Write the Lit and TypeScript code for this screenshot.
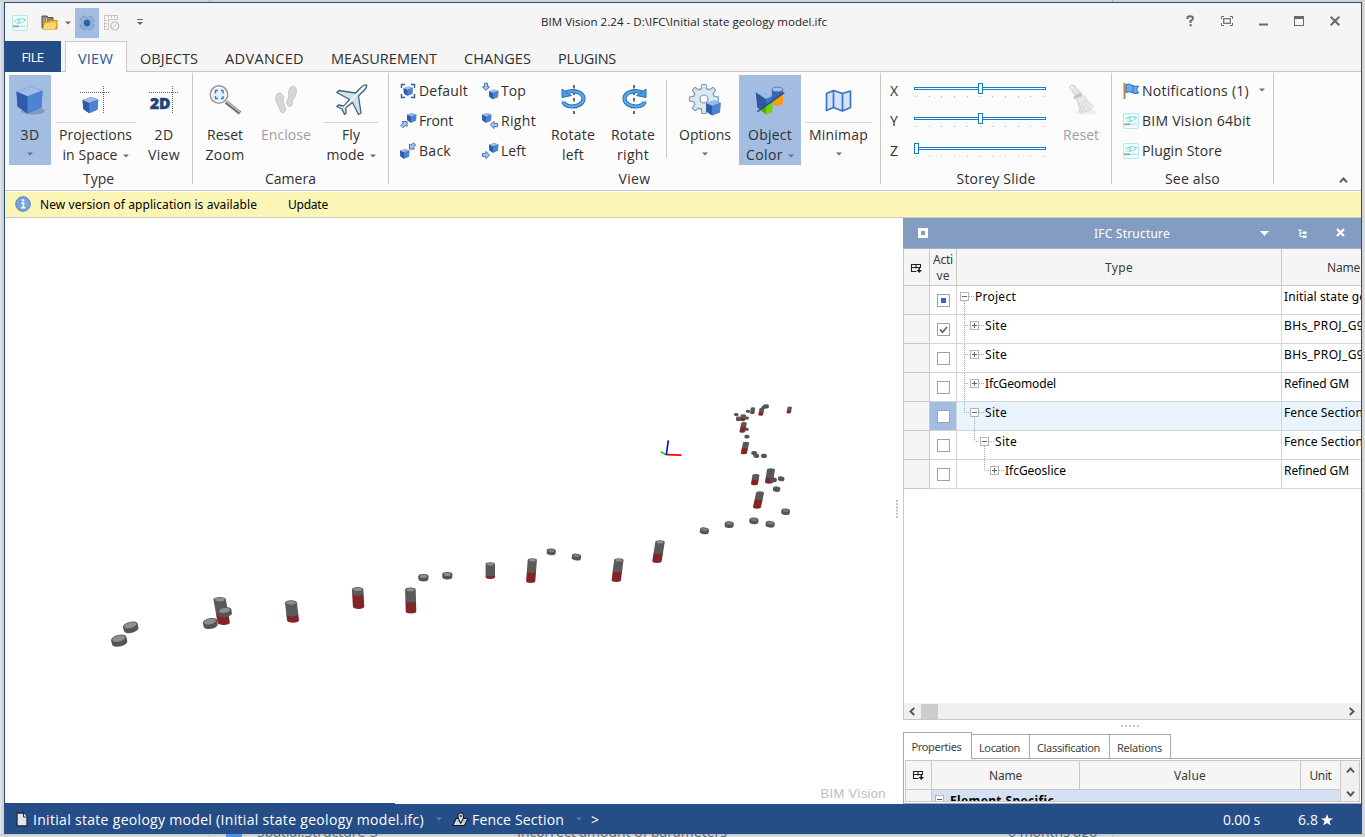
import { LitElement, html, svg, css, nothing } from "lit";
import { customElement, property } from "lit/decorators.js";

/* Single-line label whose tracking is adjusted so that it fills a given width. */
@customElement("fit-text")
class FitText extends LitElement {
  @property({ type: Number }) w = 0;
  @property() text = "";
  static styles = css`
    :host { display: inline-block; white-space: pre; flex: none; }
    .t { display: inline-block; }
  `;
  updated() {
    const t = this.renderRoot.querySelector(".t") as HTMLElement;
    t.style.letterSpacing = "0px";
    const n = t.getBoundingClientRect().width;
    if (this.w && n) {
      const ls = (this.w - n) / this.text.length;
      t.style.letterSpacing = ls.toFixed(3) + "px";
    }
  }
  render() { return html`<span class="t">${this.text}</span>`; }
}

const T = (text: string, w: number) => html`<fit-text .text=${text} .w=${w}></fit-text>`;

/* ---------- icons ---------- */
const cube = (x: number, y: number, s: number) => svg`
  <g transform="translate(${x} ${y}) scale(${s})">
    <path d="M0 5 L14 0 L26 4 L25 21 L11 27 L1 20Z" fill="#3f6fb8"/>
    <path d="M0 5 L14 0 L26 4 L11 10Z" fill="#9dbbe6"/>
    <path d="M0 5 L11 10 L11 27 L1 20Z" fill="#2b5da8"/>
    <path d="M11 10 L26 4 L25 21 L11 27Z" fill="#4c83d3"/>
  </g>`;
const arrow = (x: number, y: number, r: number) => svg`
  <path transform="translate(${x} ${y}) rotate(${r})" d="M0 3.6 L-3.6 0 L-1.6 0 L-1.6 -3.6 L1.6 -3.6 L1.6 0 L3.6 0Z"
    fill="#a9c4ec" stroke="#3a68ae" stroke-width="0.9"/>`;
const logo = () => html`<svg class="ic" width="16" height="16" viewBox="0 0 16 16">
  <rect x=".5" y=".5" width="15" height="15" rx="1.5" fill="#f3fcfd" stroke="#b4e8ed"/>
  <path d="M2.5 6 Q8 2.300 13.500 4.800 Q11 8.500 7 7.500 Q5.500 6 8 4.800" fill="none" stroke="#74d6df" stroke-width="1.100"/><path d="M3 7.500 Q5 8.800 8 8.500" fill="none" stroke="#9be0e6"/>
  <path d="M1 11.3H7" stroke="#9aa3a3" stroke-width="1.8"/><path d="M7 11.3H14.5" stroke="#c0ecef" stroke-width="1.8"/>
</svg>`;
const down = (c = "#6d6d6d") => html`<svg class="dn" width="6" height="4" viewBox="0 0 6 4"><path d="M0 .5H6L3 3.5Z" fill=${c}/></svg>`;

const rot = svg`<path d="M17 1V30" stroke="#444" stroke-width="1.600" stroke-dasharray="3.500 3"/><path d="M9 8.500 C17 5 26.500 8.500 26.500 14.500 C26.500 20 20 22.500 15 22.500 C9 22.500 6.500 19.500 6.500 17.500" fill="none" stroke="#2472bd" stroke-width="4.200"/><path d="M10 8.300 C17 5.500 26.500 9 26.500 14.500 C26.500 20 20 22.500 15 22.500 C10 22.500 7 20 6.500 18" fill="none" stroke="#5ba7e8" stroke-width="2.200"/><path d="M5 5V13.500L14.500 11.500Z" fill="#4b98dd" stroke="#2472bd"/>`;

const big: Record<string, unknown> = {
  cube: svg`<ellipse cx="19" cy="27" rx="12" ry="3.5" fill="#53709c" opacity=".45"/>${cube(2.5, 2.5, 1)}`,
  proj: svg`<path d="M0 8.500H30 M23.500 2V29" fill="none" stroke="#666" stroke-dasharray="1 1"/>${cube(2.6, 13, 0.6)}`,
  two: svg`<path d="M1 8.5H31 M24.5 2V29" fill="none" stroke="#666" stroke-dasharray="1 1"/><text x="2" y="24.5" font-family="Open Sans" font-weight="800" font-size="15.5" fill="#1f4378" stroke="#1f4378" stroke-width=".5" textLength="20.5" lengthAdjust="spacingAndGlyphs">2D</text>`,
  zoom: svg`<path d="M17 18 L31 29" stroke="#6d6d6d" stroke-width="4"/><path d="M17.5 17.5 L31 28" stroke="#c4c4c4" stroke-width="1.5"/>
    <circle cx="10" cy="10.5" r="8.6" fill="#e6f0fc" stroke="#999" stroke-width="1.8"/><circle cx="10" cy="10.5" r="7.4" fill="none" stroke="#fff"/>
    <path d="M6.5 9.5V6.500H9 M12 6.500H14V9.500 M14 12V14.500H12 M9 14.500H6.500V12" fill="none" stroke="#3a7ad0" stroke-width="1.400"/>`,
  feet: svg`<g fill="#d6d6d6" stroke="#c2c2c2" stroke-width=".8"><path d="M22 2.500 Q26 1 26.500 7 Q26 13 23.500 14.500 Q22 17 22.500 20 Q21 24 17.500 21.500 Q15.500 18 18 15 Q19.500 12 18.500 9 Q18.500 3.500 22 2.500Z"/>
    <path d="M9 9 Q13 9 13.500 14 Q12.500 19 14.500 21 Q17 27 13.500 29 Q10 29 9.500 25 Q9 22 7 20 Q5 15 6 12 Q7 9 9 9Z"/></g>`,
  plane: svg`<path d="M31.500 1 Q29 .3 26 3.500 L20.500 9 L4 6.500 L1.800 8.500 L14.500 15.500 L9 22 L3.500 21 L1.800 22.500 L7 25 L9.500 30.500 L11 29 L10.800 23.800 L17.500 18.500 L23.500 30.500 L26 29 L23.500 12 L29 6.500 Q32.500 3 31.500 1Z" fill="#cfe1ea" stroke="#42647a" stroke-width="1.300" stroke-linejoin="round"/><path d="M29 3 L9 23.500" stroke="#fff" stroke-width="1.500"/>`,
  rotl: rot,
  rotr: svg`<g transform="translate(34 0) scale(-1 1)">${rot}</g>`,
  gear: svg`${[0, 45, 90, 135, 180, 225, 270, 315].map(a => svg`<path transform="rotate(${a} 15 15)" d="M12.300 5 L13 .5 H17 L17.700 5" fill="#dfe9f2" stroke="#7d9bb5" stroke-width="1.200"/>`)}
    <circle cx="15" cy="15" r="10.600" fill="#dfe9f2" stroke="#7d9bb5" stroke-width="1.200"/>${[0, 45, 90, 135, 180, 225, 270, 315].map(a => svg`<path transform="rotate(${a} 15 15)" d="M12.900 4.600H17.100" stroke="#dfe9f2" stroke-width="2"/>`)}<circle cx="15" cy="15" r="4" fill="#fdfdfd" stroke="#7d9bb5" stroke-width="1.200"/>${cube(17, 16.500, 0.56)}`,
  color: svg`<path d="M17.800 5.500V17.500Q23.500 22.500 29 17.500V5.500Z" fill="#3565ae"/><path d="M17.800 17L29 9.500V19.500Q23.500 24 17.800 19.500Z" fill="#ff9a0b"/><ellipse cx="23.400" cy="5.500" rx="5.600" ry="2.300" fill="#a3bfe8" stroke="#4672b4" stroke-width=".8"/>
    <path d="M1.700 8.300L8.700 6.200L18.300 12L12 15Z" fill="#9ab9e6"/><path d="M1.700 8.300L12 15V29L3.300 23.700Z" fill="#2b5aa4"/><path d="M12 15L18.300 12V20L12 24Z" fill="#3f70be"/>
    <path d="M5.500 25.500L12 21V30.500Z" fill="#55ab12"/><path d="M12 21.500L18.300 17V28.300L12 30.500Z" fill="#78d200"/><path d="M3.300 27.700L30.300 8.700" stroke="#214a83" stroke-width="1.400"/>`,
  map: svg`<path d="M3.500 9.500L10.500 6.500V23.500L3.500 26.500Z M10.500 6.500L19.500 9.500V27L10.500 23.500Z M19.500 9.500L27.500 7V23.500L19.500 27Z" fill="#d4e3f7" stroke="#3a72c4" stroke-width="1.700" stroke-linejoin="round"/>`,
  broom: svg`<ellipse cx="21" cy="28.500" rx="11" ry="2.500" fill="#eee"/><path d="M11 14L19 11.500Q23 19 29 22.500Q25 28 15 28.500Q14 21 11 14Z" fill="#e9e9e9" stroke="#d6d6d6"/><path d="M16.500 17L20 28M19 16L24 26M14 18L17 28" stroke="#d6d6d6"/><path d="M4.500 3Q6.500 -.5 9.500 2L15.500 8.500L10.500 12Z" fill="#e4e4e4" stroke="#cacaca"/><path d="M8.800 14L17 9.800" stroke="#c4c4c4" stroke-width="2.600"/><circle cx="7" cy="3.800" r="1.200" fill="#fff"/>`,
};
const Big = (k: string) => html`<svg class="bi" width="32" height="32" viewBox="0 0 32 32">${big[k]}</svg>`;

const small: Record<string, unknown> = {
  Default: svg`<path d="M1.500 5V1.500H5 M11 1.500H14.500V5 M14.500 11V14.500H11 M5 14.500H1.500V11" fill="none" stroke="#2e5a98" stroke-width="1.400"/>${cube(3.600, 3.400, 0.35)}`,
  Front: svg`${cube(7, 0, 0.36)}${arrow(4.500, 11, -135)}`,
  Back: svg`${cube(0, 6, 0.36)}${arrow(12, 3.500, 45)}`,
  Top: svg`${cube(7, 6.500, 0.36)}${arrow(4, 3.800, 0)}`,
  Right: svg`${cube(0, 0, 0.36)}${arrow(12, 12, 90)}`,
  Left: svg`${cube(7, 0, 0.36)}${arrow(4, 12, -90)}`,
};
const Small = (k: string, w: number) => html`<div class="sm"><svg class="ic" width="17" height="16" viewBox="0 0 17 16">${small[k]}</svg>${T(k, w)}</div>`;

/* ---------- 3D scene ---------- */
/* [topX, topY, bottomX, bottomY, half width, y where rock begins] */
const columns = [
  [219.7, 599.5, 223.7, 622.5, 6.2, 613], [291, 602.8, 293, 620.3, 6, 614], [357.6, 589.5, 358.600, 606.500, 5.7, 593.5],
  [410.4, 589.7, 411, 611.2, 5.3, 600.6], [490.3, 564.3, 490.3, 577, 4.7, 574.5], [532.3, 560.3, 530.7, 581, 4.6, 571],
  [618.8, 560.3, 616.3, 580, 4.7, 570.2], [660, 542.3, 657, 561, 4.7, 552.2], [760, 493, 757, 507, 4, 498.2],
  [755.9, 475.400, 754.500, 483.8, 3.5, 478.5], [770.9, 470, 769, 482, 4, 476.500], [746, 443, 743.900, 453, 3.1, 447.3],
  [744, 423.3, 742.3, 431.500, 2.8, 426], [743.300, 415.4, 742.7, 420, 2.7, 417], [738.5, 417.6, 738.3, 420, 2.4, 419],
  [752.9, 408.2, 752.3, 413, 2.2, 411.500], [761.9, 408.7, 760.700, 414.8, 2.4, 411.3], [789.700, 407.4, 788.700, 412.6, 2.2, 410],
];
/* [x, y, rx, tilt] */
const discs = [
  [118.700, 638.6, 7.3, -14], [130.2, 625.3, 7, -14], [210, 621.6, 6.700, -10], [224.700, 610.4, 6.3, -8], [423.4, 576.3, 4.7, 0],
  [447.3, 574.300, 4.7, 0], [551.3, 550.600, 4.200, 3], [576.6, 555.800, 4.300, 6], [704.500, 529.6, 4.2, 8], [729.3, 523.400, 4.2, 6],
  [754, 519.6, 4.2, 6], [770.3, 523, 4.2, 8], [785.7, 510.6, 4, 6], [776.7, 488.2, 3.4, 6], [781.3, 477.900, 3, 6], [773.500, 479, 3, 0],
  [754.3, 452.3, 2.7, 6], [756.3, 455, 2.7, 6], [764, 455.2, 2.7, 6], [747, 436, 2.3, 4], [746.7, 428.8, 1.9, 4],
  [746.7, 417.4, 2, 4], [736.3, 414, 2, 4], [748, 410.800, 1.900, 4], [766, 405.600, 2.600, 0], [763.600, 406.800, 2, -10],
];
const drawColumn = ([x1, y1, x2, y2, w, ys]: number[]) => {
  const k = (ys - y1) / (y2 - y1), xs = x1 + (x2 - x1) * k, ry = w * 0.42;
  const seg = (ax: number, ay: number, bx: number, by: number, c: string) =>
    svg`<path d="M${ax - w} ${ay} L${bx - w} ${by} A${w} ${ry} 0 0 0 ${bx + w} ${by} L${ax + w} ${ay}Z" fill=${c} />`;
  return svg`${seg(xs, ys, x2, y2, "#852427")}${seg(x1, y1, xs, ys, "#595959")}
    <ellipse cx=${x1} cy=${y1} rx=${w} ry=${ry} fill="#595959"/>
    ${w > 4.2 ? svg`<ellipse cx=${x1} cy=${y1} rx=${w - 1.200} ry=${ry - 0.7} fill="#8e8e8e"/>` : nothing}`;
};
const drawDisc = ([x, y, r0, a]: number[]) => {
  const r = r0 * 1.07, ry = r * 0.47, h = r * 0.55;
  return svg`<g transform="rotate(${a} ${x} ${y})"><path d="M${x - r} ${y} V${y + h} A${r} ${ry} 0 0 0 ${x + r} ${y + h} V${y}Z" fill="#555"/>
    <ellipse cx=${x} cy=${y} rx=${r} ry=${ry} fill="#555"/>${r > 3.9 ? svg`<ellipse cx=${x} cy=${y} rx=${r - 1.2} ry=${ry - 0.7} fill=${r > 4.7 ? "#8e8e8e" : "#7c7c7c"}/>` : nothing}</g>`;
};

/* ---------- data ---------- */
const rows = [
  { d: 0, open: true, t: "Project", w: 41, n: "Initial state geology", nw: 114, c: "part" },
  { d: 1, open: false, t: "Site", w: 22, n: "BHs_PROJ_G9", nw: 80, c: "on" },
  { d: 1, open: false, t: "Site", w: 22, n: "BHs_PROJ_G9", nw: 80, c: "" },
  { d: 1, open: false, t: "IfcGeomodel", w: 71, n: "Refined GM", nw: 65, c: "" },
  { d: 1, open: true, t: "Site", w: 22, n: "Fence Section", nw: 79, c: "", sel: true },
  { d: 2, open: true, t: "Site", w: 22, n: "Fence Section", nw: 79, c: "" },
  { d: 3, open: false, t: "IfcGeoslice", w: 61, n: "Refined GM", nw: 65, c: "" },
];
const guides = ["M9.500 15V29", "M9.500 0V29M10 10.500H14", "M9.500 0V29M10 10.500H14", "M9.500 0V29M10 10.500H14",
  "M9.500 0V10.500H14M19.500 15V29", "M19.500 0V10.500H24M29.500 15V29", "M29.500 0V10.500H34"];
const colIcon = html`<svg width="11" height="10" viewBox="0 0 11 10"><path d="M.500 1.500H9.500V5 M.500 1V8.500H5.500 M5 1V5.500 M.500 4.500H9.500" fill="none" stroke="#222" stroke-width="1.100"/><path d="M5.500 7H11L8.200 10Z M7.500 5H9V7.500H7.500Z" fill="#222"/></svg>`;
const chev = (r: number) => html`<svg width="9" height="9" viewBox="0 0 9 9"><path transform="rotate(${r} 4.500 4.500)" d="M6.300 1L2.500 4.500L6.300 8" fill="none" stroke="#555" stroke-width="1.900"/></svg>`;

@customElement("app-root")
class AppRoot extends LitElement {
  static styles = css`
    :host { display: block; width: 1365px; height: 837px; overflow: hidden; font-family: "Open Sans", "Noto Sans", sans-serif; font-size: 14px; color: #303030; }
    * { box-sizing: border-box; }
    svg { display: block; flex: none; overflow: visible; }
    .desk { display: grid; grid-template: 2px 832px 3px / 4px 1358px 3px; height: 837px; background: linear-gradient(90deg, #e2e4e8, #c8cbd0 4px, #c8cbd0 1361px, #dcdcdc); }
    .above { grid-column: 1 / 4; background: #d2d2d2; display: flex; padding-left: 209px; gap: 902px; }
    .above i { width: 1px; background: #b5b5b5; }
    .win { grid-column: 2; border: 1px solid #254d87; border-bottom: 0; display: flex; flex-direction: column; background: #fff; overflow: hidden; }
    .below { grid-column: 1 / 4; background: linear-gradient(#c4c4c4, #e0e0e0); overflow: hidden; display: flex; height: 3px; color: #666; font-size: 14px; padding-left: 209px; }
    .below .ln { width: 1px; background: #c0c0c0; } .below .bl { width: 16px; background: #4f95dc; margin: 0 15px 0 16px; }
    .below span { line-height: 20px; margin-top: -12px; }
    .b1 { width: 260px; } .b2 { width: 491px; } .b3 { width: 104px; }

    .title { height: 38px; background: #f5f5f5; display: grid; grid-template-columns: 150px 1fr 190px; align-items: center; flex: none; }
    .qat { display: flex; height: 38px; align-items: center; padding: 1px 0 0 7px; }
    .qat .folder { margin-left: 13px; } .qat .q1 { margin-left: 7px; }
    .qat .tog { margin-left: 4px; width: 24px; height: 30px; background: #a3bce2; display: grid; place-items: center; }
    .qat .grid { margin-left: 5px; } .qat .more { margin-left: 17px; }
    .cap { padding-left: 386px; font-size: 11.500px; line-height: 38px; color: #222; }
    .sys { display: flex; align-items: center; justify-content: space-between; padding: 0 21px 2px 15px; }

    .tabs { height: 31px; background: #f5f5f5; display: flex; align-items: stretch; flex: none; box-shadow: inset 0 -1px #c8c8c8; font-size: 14.500px; }
    .file { width: 56px; height: 31px; background: #254d87; color: #fff; display: grid; place-items: center; font-size: 13px; padding-right: 1px; }
    .vtab { width: 62px; margin: 0 13px 0 4px; background: #fcfcfc; border: 1px solid #c8c8c8; border-bottom: 0; color: #2a579a; padding-left: 12px; line-height: 33px; }
    .tab { margin-right: 27px; line-height: 35px; }

    .ribbon { height: 119px; background: #fcfcfc; border-bottom: 1px solid #c8c8c8; display: flex; padding-top: 1px; flex: none; }
    .grp { height: 111px; border-right: 1px solid #c8c8c8; display: grid; grid-template-rows: 93px 1fr; flex: none; }
    .name { text-align: center; line-height: 26px; height: 18px; }
    .row { display: grid; padding-top: 2px; }
    .type { width: 188px; } .type .row { grid-template-columns: 4px 42px 5px 79px 5px 48px; }
    .cam { width: 196px; } .cam .row { grid-template-columns: 10px 44px 10px 58px 9px 54px; }
    .view { width: 492px; } .view .row { grid-template-columns: 11px 82px 62px 58px 62px 2px 9px 60px 4px 62px 5px 65px; }
    .sto { width: 231px; } .sto .row { grid-template-columns: 9px 156px 12px 46px; }
    .see { width: 162px; }
    .b { height: 90px; display: flex; flex-direction: column; align-items: center; padding-top: 9px; }
    .b.on { background: #a3bce2; }
    .b .bi { margin-bottom: 9px; }
    .b.hl .bi { margin-bottom: 6px; }
    .hl hr { align-self: stretch; margin: 0 0 2px; border: 0; border-top: 1px solid #d4d4d4; }
    .l { height: 20px; line-height: 20px; display: flex; align-items: center; gap: 5px; }
    .l .dn { margin-top: 1px; }
    .l.a .dn { margin-top: -2px; }
    .dis { color: #a0a0a0; }
    .vs { width: 1px; height: 78px; margin-top: 5px; background: #c8c8c8; }
    .sm { height: 30px; display: flex; align-items: center; gap: 2px; line-height: 30px; padding-top: 1px; }
    .see .sm { gap: 3px; padding-left: 11px; }
    .see .dn { margin-left: 7px; margin-top: -2px; }
    .slot { display: grid; grid-template-columns: 24px 132px; height: 30px; line-height: 32px; }
    .up { margin-left: auto; align-self: flex-end; padding: 0 13px 5px 0; }

    .note { height: 27px; padding-top: 1px; border-bottom: 1px solid #c8c8c8; background: linear-gradient(#fcfcfc 1px, #fbf6b6 1px); display: flex; align-items: center; flex: none;
      font: 12px "Noto Sans", sans-serif; color: #000; padding-left: 10px; }
    .note svg { margin-top: -1px; }
    .note .m { margin-left: 9px; } .note .u { margin-left: 31px; }

    .main { display: grid; grid-template-columns: 898px 1fr; height: 586px; flex: none; }
    .canvas { overflow: hidden; }

    .panel { display: flex; flex-direction: column; overflow: hidden; font: 12px "Noto Sans", sans-serif; color: #000; height: 586px; }
    .ph { height: 31px; background: #839cc2; border-bottom: 1px solid #9fb0cc; color: #fff; display: grid; grid-template-columns: 15px 176px 166px 38px 38px 1fr; align-items: center; flex: none; }
    .ph i { width: 10px; height: 10px; border: 3px solid #fff; background: #839cc2; }
    .thead, .tr { display: grid; grid-template-columns: 26px 27px 325px 1fr; }
    .table { border-left: 1px solid #c8c8c8; flex: none; height: 471px; }
    .thead { height: 37px; background: #f5f5f5; color: #3a3a3a; }
    .thead > * { border: 0 solid #c8c8c8; border-width: 0 1px 1px 0; display: grid; place-items: center; place-content: center; line-height: 16px; padding-top: 1px; }
    .thead > .nm { border-right: 0; justify-content: end; padding-right: 1px; }
    .tr { height: 29px; }
    .tr > * { border: 0 solid #d4d4d4; border-width: 0 1px 1px 0; overflow: hidden; }
    .tr > :first-child { background: #f5f5f5; border-color: #c8c8c8; }
    .tr > :last-child { border-right: 0; padding-left: 2px; line-height: 21px; white-space: nowrap; }
    .ck { display: grid; justify-content: center; padding-top: 8px; }
    .box { width: 13px; height: 13px; border: 1px solid #a3a3a3; background: #fff; display: grid; place-items: center; }
    .box b { width: 5px; height: 5px; background: #3c69ae; }
    .tr.sel > * { background-color: #e8f5ff; }
    .tr.sel > :first-child { background: #f5f5f5; }
    .tr.sel > .ck { background: #a3bce2; }
    .ty { display: flex; line-height: 21px; }
    .ty fit-text { margin-left: 1px; }
    .fill { height: 214px; }
    .hs { height: 17px; background: #f0f0f0; border-bottom: 1px solid #c8c8c8; display: flex; align-items: center; padding-left: 4px; }
    .hs i { width: 17px; height: 15px; background: #cdcdcd; margin-left: 4px; margin-right: auto; }
    .hs svg:last-child { margin-right: 5px; }
    .dots { height: 12px; display: flex; justify-content: center; gap: 2px; padding: 5px 4px 0 0; flex: none; }
    .dots i { width: 2px; height: 2px; background: #c2c2c2; }
    .ptabs { display: flex; align-items: flex-end; height: 27px; box-shadow: inset 0 -1px #a8a8a8; font-size: 11px; color: #444; flex: none; }
    .ptabs div { height: 25px; border: 1px solid #a8a8a8; border-left: 0; text-align: center; line-height: 26px; }
    .ptabs .p0 { height: 27px; width: 69px; border-left: 1px solid #a8a8a8; border-bottom: 0; line-height: 28px; background: #fff; padding-right: 2px; }
    .ptabs .p1 { width: 58px; padding-right: 2px; } .ptabs .p2 { width: 80px; padding-right: 2px; } .ptabs .p3 { width: 61px; padding-right: 1px; }
    .pbox { flex: none; height: 45px; border-left: 1px solid #a8a8a8; border-bottom: 1px solid #a8a8a8; padding: 1px 1px 1px 1px; }
    .pin { border: 1px solid #c8c8c8; height: 42px; overflow: hidden; display: grid; grid-template: 29px 20px / 26px 148px 221px 40px 1fr; color: #3a3a3a; }
    .pin > div { border: 0 solid #c8c8c8; border-width: 0 1px 1px 0; background: #f5f5f5; display: grid; place-items: center; }
    .pin > .sb { grid-column: 5; grid-row: 1 / 3; border: 0; background: #f0f0f0; align-content: start; padding-top: 5px; gap: 14px; }
    .pin > .es { grid-column: 2 / 5; background: #d5e0f2; display: flex; align-items: flex-start; gap: 6px; padding: 5px 0 0 3px; font-weight: 700; color: #000; line-height: 12px; font-size: 12px; }

    .status { height: 31px; background: #254d87; color: #fff; display: flex; align-items: center; padding: 0 28px 0 11px; flex: none; line-height: 30px; }
    .status .dn { margin: 0 0 2px 12px; }
    .s1 { margin-left: 5px; } .s2 { margin-left: 10px; } .s3 { margin-left: 3px; } .s4 { margin-left: 9px; }
    .s5 { margin-left: auto; } .s6 { margin-left: 38px; } .star { margin-left: 3px; }
  `;

  slider(name: string, pos: number) {
    return html`<div class="slot"><span>${name}</span>
      <svg width="132" height="30" viewBox="0 0 132 30">
        <rect x=".5" y="12.500" width="131" height="2" fill="#fff" stroke="#1979ca"/>
        <rect x=${pos + 0.5} y="8.500" width="4" height="10" fill="#fff" stroke="#1979ca"/>
        ${Array.from({ length: 11 }, (_, i) => svg`<rect x=${Math.round(2 + i * 12.7)} y="21" width="1" height="1" fill="#b0b0b0"/>`)}
      </svg></div>`;
  }

  render() {
    return html`<div class="desk">
      <div class="above"><i></i><i></i></div>
      <div class="win">
        <div class="title">
          <div class="qat">${logo()}
            <svg class="folder" width="17" height="16" viewBox="0 0 17 16"><path d="M1 1H6L7 2.500H12V13H1Z" fill="#8b8069" stroke="#605846"/><path d="M3 3V12M5.500 3V9" stroke="#cfc8b6"/><path d="M3.500 7H7.500L9 5.500H16V14H1.500Z" fill="#f6be3f" stroke="#c78a12"/><path d="M4 8H15.500L13.500 14H2Z" fill="#ffd66d"/></svg>
            <span class="q1">${down()}</span>
            <div class="tog"><svg width="16" height="16" viewBox="0 0 16 16"><circle cx="8" cy="8" r="3.400" fill="#2f619f"/><circle cx="8" cy="8" r="5.300" fill="none" stroke="#6f95ca" stroke-width=".9"/><circle cx="8" cy="8" r="7.300" fill="none" stroke="#5d86bf" stroke-dasharray="8.500 3" stroke-dashoffset="-1.500" stroke-width=".9"/></svg></div>
            <svg class="grid" width="16" height="16" viewBox="0 0 16 16" fill="none" stroke="#c6c6c6"><path d="M.500 .500H13.500V5 M.500 .500V14.500H4.500V4.500H13.500M4.500 1V3M7.500 1V3M10.500 1V3M1 5.500H3M1 8.500H3M1 11.500H3"/><circle cx="10.800" cy="11" r="4" stroke="#bbb" stroke-width="1.200"/><path d="M8 14L13.500 8"/></svg>
            <svg class="more" width="6" height="7" viewBox="0 0 6 7"><path d="M0 .5H6" stroke="#666"/><path d="M0 3H6L3 6Z" fill="#666"/></svg>
          </div>
          <div class="cap">${T("BIM Vision 2.24 - D:\\IFC\\Initial state geology model.ifc", 286)}</div>
          <div class="sys">
            <svg width="9" height="12" viewBox="0 0 9 12"><path d="M1.500 4V2.700Q1.500 1.300 4.200 1.300Q7 1.300 7 3.300Q7 5 4.500 6V8" fill="none" stroke="#6b6b6b" stroke-width="2"/><rect x="3.500" y="9.200" width="2.200" height="2" fill="#6b6b6b"/></svg>
            <svg width="12" height="10" viewBox="0 0 12 10" fill="none" stroke="#6b6b6b"><path d="M.500 3V.500H3M9 .500H11.500V3M11.500 7V9.500H9M3 9.500H.500V7"/><rect x="2.700" y="2.700" width="6.600" height="4.600" stroke-width="1.200"/></svg>
            <svg width="9" height="10" viewBox="0 0 9 10"><path d="M0 8.500H9" stroke="#6b6b6b" stroke-width="2"/></svg>
            <svg width="10" height="10" viewBox="0 0 10 10"><rect x=".5" y=".5" width="9" height="9" fill="none" stroke="#6b6b6b"/><path d="M0 1.500H10" stroke="#6b6b6b" stroke-width="3"/></svg>
            <svg width="10" height="10" viewBox="0 0 10 10"><path d="M.700 .700L9.300 9.300M9.300 .700L.700 9.300" stroke="#6b6b6b" stroke-width="2.100"/></svg>
          </div>
        </div>
        <div class="tabs"><div class="file">${T("FILE", 22)}</div><div class="vtab">${T("VIEW", 35)}</div>
          ${([["OBJECTS", 58], ["ADVANCED", 79], ["MEASUREMENT", 106], ["CHANGES", 67], ["PLUGINS", 58]] as [string, number][]).map(([t, w]) => html`<div class="tab">${T(t, w)}</div>`)}
        </div>
        <div class="ribbon">
          <div class="grp type"><div class="row">
            <i></i><div class="b on">${Big("cube")}<div class="l">${T("3D", 19)}</div><div class="l a">${down()}</div></div>
            <i></i><div class="b hl">${Big("proj")}<hr /><div class="l">${T("Projections", 73)}</div><div class="l">${T("in Space", 55)}${down()}</div></div>
            <i></i><div class="b">${Big("two")}<div class="l">${T("2D", 19)}</div><div class="l">${T("View", 32)}</div></div>
          </div><div class="name">${T("Type", 31)}</div></div>
          <div class="grp cam"><div class="row">
            <i></i><div class="b">${Big("zoom")}<div class="l">${T("Reset", 36)}</div><div class="l">${T("Zoom", 39)}</div></div>
            <i></i><div class="b dis">${Big("feet")}<div class="l">${T("Enclose", 50)}</div></div>
            <i></i><div class="b hl">${Big("plane")}<hr /><div class="l">${T("Fly", 18)}</div><div class="l">${T("mode", 38)}${down()}</div></div>
          </div><div class="name">${T("Camera", 51)}</div></div>
          <div class="grp view"><div class="row">
            <i></i><div>${Small("Default", 49)}${Small("Front", 34)}${Small("Back", 32)}</div>
            <div>${Small("Top", 25)}${Small("Right", 35)}${Small("Left", 25)}</div>
            <div class="b">${Big("rotl")}<div class="l">${T("Rotate", 44)}</div><div class="l">${T("left", 22)}</div></div>
            <div class="b">${Big("rotr")}<div class="l">${T("Rotate", 44)}</div><div class="l">${T("right", 32)}</div></div>
            <i></i><div class="vs"></div>
            <div class="b">${Big("gear")}<div class="l">${T("Options", 52)}</div><div class="l a">${down()}</div></div>
            <i></i><div class="b on">${Big("color")}<div class="l">${T("Object", 44)}</div><div class="l">${T("Color", 37)}${down()}</div></div>
            <i></i><div class="b hl">${Big("map")}<hr /><div class="l">${T("Minimap", 59)}</div><div class="l a">${down()}</div></div>
          </div><div class="name">${T("View", 32)}</div></div>
          <div class="grp sto"><div class="row">
            <i></i><div>${this.slider("X", 64)}${this.slider("Y", 64)}${this.slider("Z", 0)}</div>
            <i></i><div class="b dis">${Big("broom")}<div class="l">${T("Reset", 36)}</div></div>
          </div><div class="name">${T("Storey Slide", 79)}</div></div>
          <div class="grp see"><div class="row"><div>
            <div class="sm"><svg class="ic" width="16" height="16" viewBox="0 0 16 16"><path d="M1.500 0V16" stroke="#b5873a" stroke-width="2"/><path d="M3 1.500Q7 0 9 2.500Q12 4 15.500 3L13.500 6.500L15.500 10Q12 11.500 9 9.500Q6 8 3 9.500Z" fill="#6ba9ee" stroke="#2d68b5"/><path d="M10 2V9" stroke="#2d68b5"/></svg>${T("Notifications (1)", 107)}${down()}</div>
            <div class="sm">${logo()}${T("BIM Vision 64bit", 109)}</div>
            <div class="sm">${logo()}${T("Plugin Store", 80)}</div>
          </div></div><div class="name">${T("See also", 55)}</div></div>
          <div class="up">${chev(90)}</div>
        </div>
        <div class="note">
          <svg width="16" height="16" viewBox="0 0 16 16"><circle cx="8" cy="8" r="7.300" fill="#7ba3dd" stroke="#5c83bd"/><circle cx="8" cy="4.300" r="1.200" fill="#fff"/><path d="M6.300 7H8.500V11.500M6 11.800H10.300" fill="none" stroke="#fff" stroke-width="1.600"/></svg>
          <span class="m">${T("New version of application is available", 217)}</span><span class="u">${T("Update", 40)}</span>
        </div>
        <div class="main">
          <div class="canvas"><svg width="898" height="586" viewBox="5 218 898 586">
            ${columns.map(drawColumn)}${discs.map(drawDisc)}
            <path d="M666.300 454.700L660.700 451.700" stroke="#00e000" stroke-width="1.600"/><path d="M666.300 454.700L681.300 455.200" stroke="#f00" stroke-width="1.800"/><path d="M666.300 455L668.300 440.300" stroke="#00f" stroke-width="1.600"/>
            ${[0, 1, 2, 3, 4, 5].map(i => svg`<rect x="896" y=${500 + i * 3.200} width="2" height="2" fill="#c2c2c2"/>`)}
            <text x="820.500" y="798" font-family="Liberation Sans" font-size="13" fill="#bdbdbd" textLength="65">BIM Vision</text>
            <rect x="5" y="803" width="390" height="1" fill="#254d87"/>
          </svg></div>
          <div class="panel">
            <div class="ph"><span></span><i></i><span>${T("IFC Structure", 76)}</span>
              <svg width="9" height="5" viewBox="0 0 9 5"><path d="M0 0H9L4.500 5Z" fill="#fff"/></svg>
              <svg width="9" height="9" viewBox="0 0 9 9"><path d="M0 1H4M2 1V7.500H5M2 4H5" fill="none" stroke="#fff"/><rect x="5" y="2.500" width="3.500" height="2.500" fill="#fff"/><rect x="5" y="6.500" width="3.500" height="2.500" fill="#fff"/></svg>
              <svg width="9" height="9" viewBox="0 0 9 9"><path d="M1 0L8 7M8 0L1 7" stroke="#fff" stroke-width="2.200"/></svg>
            </div>
            <div class="table">
              <div class="thead"><div>${colIcon}</div><div>${T("Acti", 20)}${T("ve", 13)}</div><div>${T("Type", 28)}</div><div class="nm">${T("Name", 33)}</div></div>
              ${rows.map((r, i) => html`<div class="tr ${r.sel ? "sel" : ""}"><div></div>
                <div class="ck"><div class="box">${r.c === "part" ? html`<b></b>` : r.c === "on" ? html`<svg width="9" height="8" viewBox="0 0 9 8"><path d="M1 3.500L3.500 6.300L8 1" fill="none" stroke="#4a5f8c" stroke-width="1.700"/></svg>` : nothing}</div></div>
                <div class="ty"><svg width=${17 + r.d * 10} height="28" viewBox="-2 0 ${17 + r.d * 10} 28">
                  <path transform="translate(-4 0)" d=${guides[i]} fill="none" stroke="#aaa" stroke-dasharray="1 1"/>
                  <g transform="translate(${1 + r.d * 10} 6)"><path d="M9 4.500H14" stroke="#aaa" stroke-dasharray="1 1"/><rect x=".5" y=".5" width="8" height="8" fill="#fff" stroke="#b5b5b5"/><path d=${r.open ? "M2 4.500H7" : "M2 4.500H7M4.500 2V7"} stroke="#666"/></g>
                </svg>${T(r.t, r.w)}</div>
                <div>${T(r.n, r.nw)}</div></div>`)}
              <div class="fill"></div>
              <div class="hs">${chev(0)}<i></i>${chev(180)}</div>
            </div>
            <div class="dots"><i></i><i></i><i></i><i></i><i></i></div>
            <div class="ptabs"><div class="p0">${T("Properties", 50)}</div><div class="p1">${T("Location", 41)}</div><div class="p2">${T("Classification", 63)}</div><div class="p3">${T("Relations", 45)}</div></div>
            <div class="pbox"><div class="pin"><div>${colIcon}</div><div>${T("Name", 33)}</div><div>${T("Value", 32)}</div><div>${T("Unit", 22)}</div>
              <div class="sb">${chev(90)}${chev(-90)}</div><div></div>
              <div class="es"><svg width="9" height="9" viewBox="0 0 9 9"><rect x=".5" y=".5" width="8" height="8" fill="#fff" stroke="#b5b5b5"/><path d="M2 4.500H7" stroke="#555"/></svg>${T("Element Specific", 104)}</div>
            </div></div>
          </div>
        </div>
        <div class="status">
          <svg width="12" height="15" viewBox="0 0 12 15"><path d="M1 1H7.500L11 4.500V14H1Z" fill="#dfe3ec" stroke="#1b2a44" stroke-width="1.300"/><path d="M7.500 1V5H11" fill="#fff" stroke="#1b2a44"/></svg>
          <span class="s1">${T("Initial state geology model (Initial state geology model.ifc)", 391)}</span>${down("#6b7f9f")}
          <svg class="s2" width="17" height="15" viewBox="0 0 17 15"><path d="M4 6.500H16L12.500 13.500H.800Z" fill="#d3d7de" stroke="#101828" stroke-width="1.200" stroke-linejoin="round"/><path d="M8.700 11.300L6.300 6.500Q5 1 8.700 1Q12.400 1 11.200 6.500Z" fill="#e3e6ec" stroke="#101828" stroke-width="1.100"/><circle cx="8.700" cy="4" r="1.200" fill="#254d87"/><path d="M5 9H7M11 9H13" stroke="#8f97a5"/></svg>
          <span class="s3">${T("Fence Section", 92)}</span>${down("#6b7f9f")}<span class="s4">${T(">", 7)}</span>
          <span class="s5">${T("0.00 s", 37)}</span><span class="s6">${T("6.8", 20)}</span>
          <svg class="star" width="12" height="12" viewBox="0 0 12 12"><path d="M6 0L7.500 4.200L12 4.400L8.500 7.100L9.700 11.500L6 9L2.300 11.500L3.500 7.100L0 4.400L4.500 4.200Z" fill="#fff"/></svg>
        </div>
      </div>
      <div class="below"><i class="ln"></i><i class="bl"></i><span class="b1">Spatial.Structure-3</span><span class="b2">Incorrect amount of parameters</span><span class="b3">6 months ago</span><i class="ln"></i></div>
    </div>`;
  }
}
